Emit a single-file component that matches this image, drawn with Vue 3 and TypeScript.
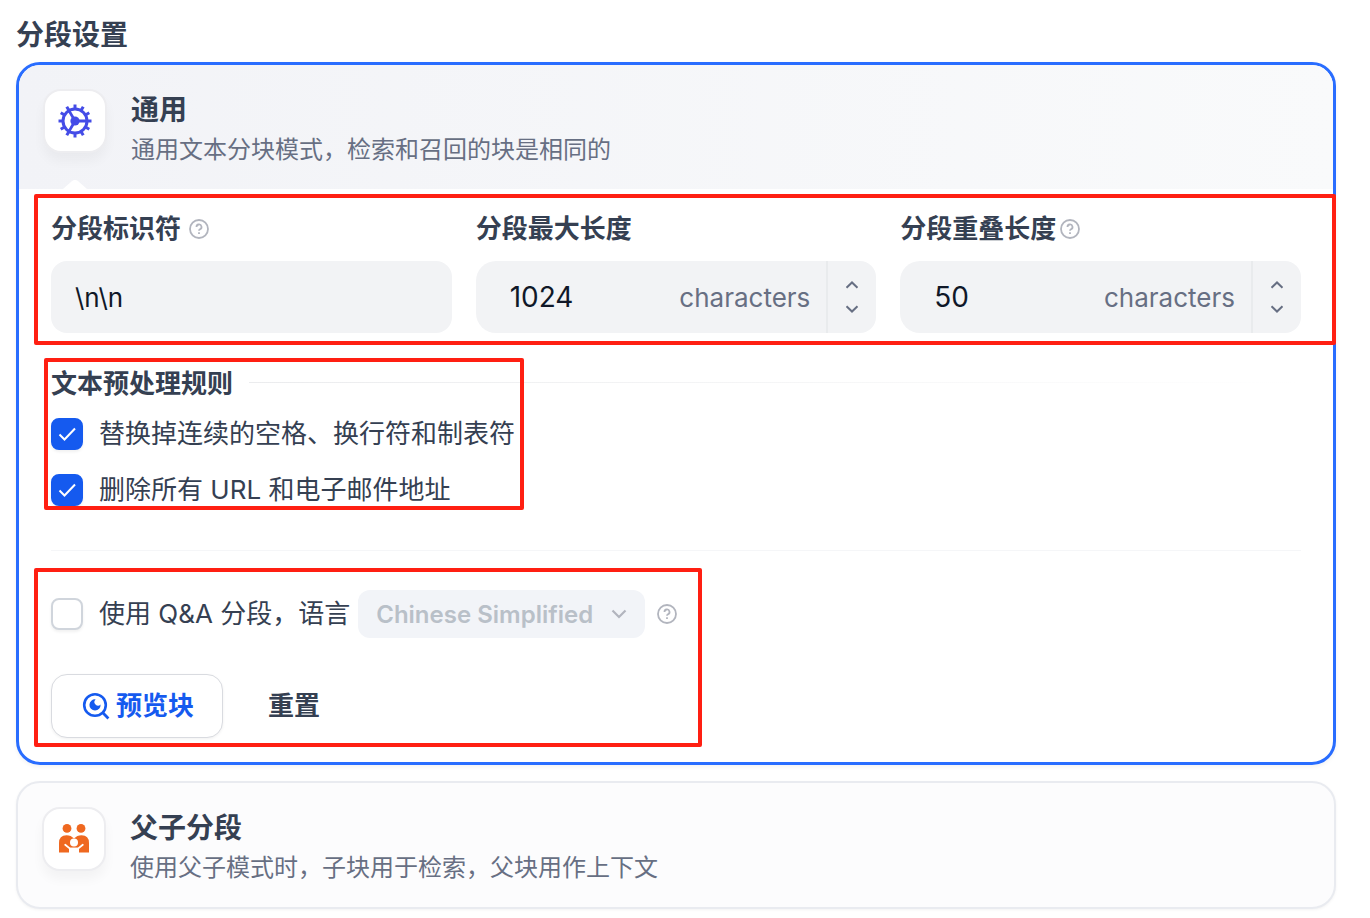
<script setup lang="ts">
import { reactive, ref } from 'vue'

const separator = ref('\\n\\n')
const maxLength = ref('1024')
const overlap = ref('50')

const rules = reactive([
  { id: 'spaces', label: '替换掉连续的空格、换行符和制表符', on: true },
  { id: 'urls', label: '删除所有 URL 和电子邮件地址', on: true },
])
const useQa = ref(false)

const teeth = Array.from({ length: 12 }, (_, i) => i * 30)

function step(target: 'max' | 'overlap', by: number) {
  const field = target === 'max' ? maxLength : overlap
  field.value = String(Math.max(0, Number(field.value) + by))
}
function reset() {
  separator.value = '\\n\\n'
  maxLength.value = '1024'
  overlap.value = '50'
  useQa.value = false
}
</script>

<template>
  <main class="page">
    <h1 class="page-title">分段设置</h1>

    <section class="card active">
      <header class="card-head">
        <span class="icon-box">
          <svg class="mode-icon" viewBox="0 0 40 40" aria-hidden="true">
            <g fill="none" stroke="#444ce7">
              <circle cx="20" cy="20" r="12" stroke-width="3" />
              <path d="M20 20H32M20 20L14 9.6M20 20L14 30.4" stroke-width="2.8" />
              <path
                v-for="angle in teeth"
                :key="angle"
                d="M32 20H36.5"
                stroke-width="3"
                :transform="`rotate(${angle} 20 20)`"
              />
            </g>
            <circle cx="20" cy="20" r="4.6" fill="#444ce7" />
          </svg>
        </span>
        <div class="head-text">
          <h2>通用</h2>
          <p>通用文本分块模式，检索和召回的块是相同的</p>
        </div>
        <svg class="notch" viewBox="0 0 24 9" aria-hidden="true">
          <path d="M0 9L8.5 1.4Q12 -1.2 15.5 1.4L24 9Z" fill="#fff" />
        </svg>
      </header>

      <div class="card-body">
        <div class="fields">
          <div class="field">
            <div class="label-row">
              <label for="separator">分段标识符</label>
              <svg class="help spaced" viewBox="0 0 20 20" aria-hidden="true">
                <circle cx="10" cy="10" r="9" />
                <path d="M7.5 8A2.5 2.5 0 1 1 10.9 10.3Q10 10.7 10 11.8M10 13.2V15" />
              </svg>
            </div>
            <input id="separator" v-model="separator" class="text-input" type="text" />
          </div>

          <div class="field">
            <div class="label-row"><label for="max-length">分段最大长度</label></div>
            <div class="number-box">
              <input id="max-length" v-model="maxLength" type="text" inputmode="numeric" />
              <span class="unit">characters</span>
              <div class="stepper">
                <button type="button" aria-label="增加" @click="step('max', 1)">
                  <svg viewBox="0 0 14 8"><path d="M1.5 6.8L7 1.5L12.5 6.8" /></svg>
                </button>
                <button type="button" aria-label="减少" @click="step('max', -1)">
                  <svg viewBox="0 0 14 8"><path d="M1.5 1.2L7 6.5L12.5 1.2" /></svg>
                </button>
              </div>
            </div>
          </div>

          <div class="field">
            <div class="label-row">
              <label for="overlap">分段重叠长度</label>
              <svg class="help" viewBox="0 0 20 20" aria-hidden="true">
                <circle cx="10" cy="10" r="9" />
                <path d="M7.5 8A2.5 2.5 0 1 1 10.9 10.3Q10 10.7 10 11.8M10 13.2V15" />
              </svg>
            </div>
            <div class="number-box">
              <input id="overlap" v-model="overlap" type="text" inputmode="numeric" />
              <span class="unit">characters</span>
              <div class="stepper">
                <button type="button" aria-label="增加" @click="step('overlap', 1)">
                  <svg viewBox="0 0 14 8"><path d="M1.5 6.8L7 1.5L12.5 6.8" /></svg>
                </button>
                <button type="button" aria-label="减少" @click="step('overlap', -1)">
                  <svg viewBox="0 0 14 8"><path d="M1.5 1.2L7 6.5L12.5 1.2" /></svg>
                </button>
              </div>
            </div>
          </div>
          <span class="mark mark-fields"></span>
        </div>

        <div class="rules">
          <div class="rules-head">
            <h3>文本预处理规则</h3>
            <span class="fade-line"></span>
          </div>
          <ul class="rule-list">
            <li v-for="rule in rules" :key="rule.id" class="check-row">
              <span class="check">
                <input :id="rule.id" v-model="rule.on" type="checkbox" />
                <svg v-if="rule.on" viewBox="0 0 32 32" aria-hidden="true">
                  <path d="M8.5 16.5L13.5 21.5L24 10.5" />
                </svg>
              </span>
              <label :for="rule.id">{{ rule.label }}</label>
            </li>
          </ul>
          <span class="mark mark-rules"></span>
        </div>

        <hr class="divider" />

        <div class="bottom">
          <div class="qa-row">
            <span class="check">
              <input id="use-qa" v-model="useQa" type="checkbox" />
              <svg v-if="useQa" viewBox="0 0 32 32" aria-hidden="true">
                <path d="M8.5 16.5L13.5 21.5L24 10.5" />
              </svg>
            </span>
            <label for="use-qa">使用 Q&amp;A 分段，语言</label>
            <span class="select-box">
              <select aria-label="语言" :disabled="!useQa">
                <option>Chinese Simplified</option>
              </select>
              <svg viewBox="0 0 16 10" aria-hidden="true"><path d="M1.5 1.5L8 8L14.5 1.5" /></svg>
            </span>
            <svg class="help" viewBox="0 0 20 20" aria-hidden="true">
              <circle cx="10" cy="10" r="9" />
              <path d="M7.5 8A2.5 2.5 0 1 1 10.9 10.3Q10 10.7 10 11.8M10 13.2V15" />
            </svg>
          </div>
          <div class="actions">
            <button type="button" class="btn primary">
              <svg viewBox="0 0 32 32" aria-hidden="true">
                <circle cx="15" cy="15" r="10.8" fill="none" stroke="currentColor" stroke-width="2.6" />
                <path d="M22.6 22.6L28.4 28.4" fill="none" stroke="currentColor" stroke-width="2.8" />
                <path
                  d="M15.6 9.4A5.6 5.6 0 1 0 20.6 14.6A3.4 3.4 0 0 1 15.6 9.4Z"
                  fill="currentColor"
                />
              </svg>
              预览块
            </button>
            <button type="button" class="btn" @click="reset">重置</button>
          </div>
          <span class="mark mark-bottom"></span>
        </div>
      </div>
    </section>

    <section class="card plain">
      <header class="card-head">
        <span class="icon-box">
          <svg class="mode-icon" viewBox="0 0 40 40" aria-hidden="true">
            <g fill="#ef6820">
              <circle cx="13" cy="9.4" r="4.4" />
              <circle cx="27" cy="9.4" r="4.4" />
              <path
                d="M5 33.5V24Q5 16.2 12.5 16.2Q17 16.2 20 19.6Q23 16.2 27.5 16.2Q35 16.2 35 24V33.5H25V28.8H15V33.5Z"
              />
            </g>
            <circle cx="20" cy="23.5" r="4" fill="#fff" />
            <path
              d="M11.2 25.8L16 29.6H24L28.8 25.8"
              fill="none"
              stroke="#fff"
              stroke-width="1.8"
              stroke-linecap="round"
            />
          </svg>
        </span>
        <div class="head-text">
          <h2>父子分段</h2>
          <p>使用父子模式时，子块用于检索，父块用作上下文</p>
        </div>
      </header>
    </section>
  </main>
</template>

<style>
body {
  margin: 0;
  background: #fff;
}
</style>

<style scoped>
.page,
.page input,
.page select,
.page button {
  font-family: Inter, 'Noto Sans CJK SC', sans-serif;
}
.page {
  box-sizing: border-box;
  padding: 14px 34px 8px 16px;
  color: #354052;
  font-size: 26px;
}
.page *,
.page *::before,
.page *::after {
  box-sizing: border-box;
}
h1,
h2,
h3,
p,
ul {
  margin: 0;
  padding: 0;
}
.page-title {
  margin-bottom: 6px;
  font-size: 28px;
  line-height: 42px;
  font-weight: 600;
}
.card {
  border-radius: 24px;
}
.card.active {
  border: 3px solid #296dff;
  background: #fff;
  box-shadow: 0 2px 4px rgba(9, 9, 11, 0.05);
}
.card.plain {
  margin-top: 16px;
  border: 2px solid #e9ebf0;
  background: #fcfcfd;
  box-shadow: 0 1px 3px rgba(9, 9, 11, 0.05);
}
.card-head {
  position: relative;
  display: flex;
  gap: 24px;
  padding: 24px;
}
.active .card-head {
  border-radius: 21px 21px 0 0;
  background: linear-gradient(90deg, #f2f3f7, #f9fafb);
}
.icon-box {
  display: grid;
  place-items: center;
  flex: none;
  width: 64px;
  height: 64px;
  border: 2px solid #ededf0;
  border-radius: 18px;
  background: #fff;
  box-shadow: 0 8px 12px rgba(9, 9, 11, 0.04);
}
.mode-icon {
  width: 40px;
  height: 40px;
}
.head-text h2 {
  font-size: 28px;
  line-height: 42px;
  font-weight: 600;
}
.head-text p {
  color: #676f83;
  font-size: 24px;
  line-height: 34px;
}
.head-text p {
  padding-top: 2px;
  margin-bottom: -2px;
}
.notch {
  position: absolute;
  left: 44px;
  bottom: 0;
  width: 24px;
  height: 9px;
}
.card-body {
  padding: 24px 32px;
}
.fields {
  position: relative;
  display: grid;
  grid-template-columns: repeat(3, minmax(0, 1fr));
  gap: 24px;
}
.label-row {
  display: flex;
  align-items: center;
  gap: 4px;
  height: 32px;
  margin-bottom: 16px;
  line-height: 32px;
  font-weight: 600;
}
.help {
  flex: none;
  width: 20px;
  height: 20px;
  fill: none;
  stroke: #b2b5be;
  stroke-width: 1.8;
}
.help.spaced {
  margin-left: 4px;
}
.text-input,
.number-box input {
  width: 100%;
  min-width: 0;
  height: 72px;
  border: 0;
  outline: 0;
  color: #101828;
  font-size: 26px;
}
.text-input {
  padding: 0 24px;
  border-radius: 16px;
  background: #f2f3f5;
}
.number-box {
  display: flex;
  align-items: center;
  overflow: hidden;
  border-radius: 20px 16px 16px 20px;
  background: #f2f3f5;
}
.number-box input {
  flex: 1;
  padding: 0 0 0 34px;
  background: transparent;
  font-size: 28px;
}
.unit {
  margin: 0 16px;
  color: #676f83;
}
.stepper {
  display: flex;
  flex: none;
  flex-direction: column;
  width: 50px;
  height: 72px;
  padding: 12px 0;
  border-left: 2px solid #e9ebed;
}
.stepper button {
  display: grid;
  place-items: center;
  flex: 1;
  padding: 0;
  border: 0;
  background: none;
}
.stepper svg {
  width: 14px;
  height: 8px;
  fill: none;
  stroke: #676f83;
  stroke-width: 2;
}
.rules {
  position: relative;
  margin-top: 32px;
}
.rules-head {
  display: flex;
  align-items: center;
  gap: 16px;
  margin-bottom: 16px;
}
.rules-head h3 {
  font-size: 26px;
  line-height: 37px;
  font-weight: 600;
}
.fade-line {
  flex: 1;
  height: 1px;
  margin-bottom: 3px;
  background: linear-gradient(90deg, #ebecee, #fff);
}
.rule-list {
  display: grid;
  gap: 24px;
  list-style: none;
}
.check-row {
  display: flex;
  align-items: center;
  gap: 16px;
  height: 32px;
  line-height: 34px;
}
.check {
  display: grid;
  flex: none;
}
.check input,
.check svg {
  grid-area: 1 / 1;
  width: 32px;
  height: 32px;
}
.check input {
  margin: 0;
  appearance: none;
  border: 2px solid #d0d5dc;
  border-radius: 8px;
  background: #fff;
  box-shadow: 0 2px 3px rgba(9, 9, 11, 0.06);
}
.check input:checked {
  border-color: #155aef;
  background: #155aef;
}
.check svg {
  fill: none;
  stroke: #fff;
  stroke-width: 2;
  pointer-events: none;
}
.divider {
  height: 1px;
  margin: 44px 0 39px;
  border: 0;
  background: #f5f6f8;
}
.bottom {
  position: relative;
}
.qa-row {
  display: flex;
  align-items: center;
  line-height: 32px;
}
.qa-row label {
  margin: 0 8px 0 16px;
}
.select-box {
  position: relative;
  display: flex;
  align-items: center;
  margin-right: 12px;
}
.select-box select {
  height: 48px;
  padding: 0 52px 0 18px;
  appearance: none;
  border: 0;
  border-radius: 12px;
  background: #f2f4f8;
  color: #b9c0c8;
  font-size: 24px;
  font-weight: 600;
  opacity: 1;
}
.select-box svg {
  position: absolute;
  right: 18px;
  width: 16px;
  height: 10px;
  fill: none;
  stroke: #b2b5be;
  stroke-width: 2.2;
  pointer-events: none;
}
.actions {
  display: flex;
  gap: 16px;
  margin-top: 36px;
}
.btn {
  display: flex;
  align-items: center;
  gap: 4px;
  height: 64px;
  padding: 0 28px;
  border: 1px solid transparent;
  border-radius: 16px;
  background: none;
  color: #354052;
  font-size: 26px;
  line-height: 32px;
  font-weight: 600;
}
.btn.primary {
  border-color: #d9dbe0;
  background: #fff;
  box-shadow: 0 1px 3px rgba(9, 9, 11, 0.06);
  color: #155aef;
}
.btn svg {
  width: 32px;
  height: 32px;
}
.mark {
  position: absolute;
  border: 4px solid #ff1f12;
  border-radius: 2px;
  pointer-events: none;
}
.mark-fields {
  inset: -19px -35px -12px -17px;
}
.mark-rules {
  top: -7px;
  bottom: -4px;
  left: -7px;
  width: 480px;
}
.mark-bottom {
  top: -22px;
  bottom: -9px;
  left: -17px;
  width: 668px;
}
</style>
